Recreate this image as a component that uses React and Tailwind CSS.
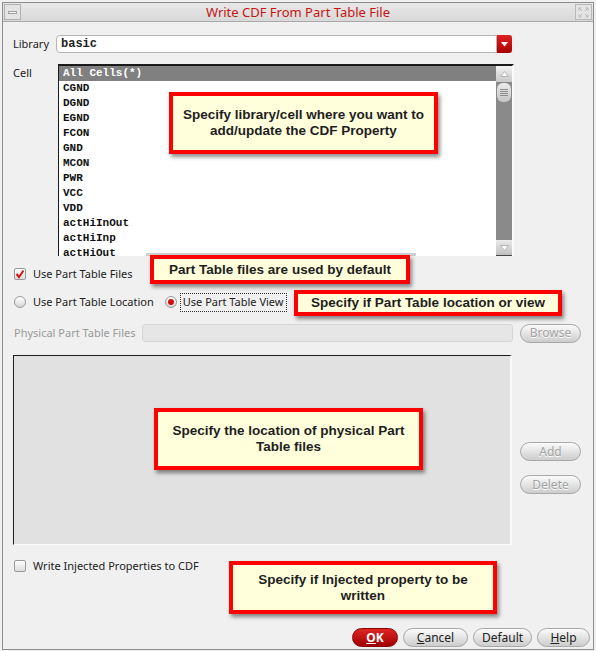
import React from 'react'

const ui = { fontFamily: '"Noto Sans", "DejaVu Sans", sans-serif' }
const mono = { fontFamily: '"Liberation Mono", "DejaVu Sans Mono", monospace' }
const note = { fontFamily: '"Liberation Sans", Arial, sans-serif' }

const cells = ['CGND', 'DGND', 'EGND', 'FCON', 'GND', 'MCON', 'PWR', 'VCC', 'VDD', 'actHiInOut', 'actHiInp', 'actHiOut']

function Btn({ children, className = '', disabled }) {
  return (
    <div
      className={`h-[19px] rounded-full border border-[#a8a8a8] bg-gradient-to-b from-[#fbfbfb] to-[#cdcdcd] flex items-center justify-center text-[12px] ${disabled ? 'text-[#a2a2a2] [text-shadow:0_1px_0_#fff]' : 'text-[#222]'} ${className}`}
    >
      {children}
    </div>
  )
}

function Callout({ className, children }) {
  return (
    <div
      style={note}
      className={`absolute border-[4px] border-[#ff0000] bg-[#ffffdc] shadow-[2px_3px_4px_rgba(0,0,0,0.45)] flex items-center justify-center text-center text-[13.5px] leading-[16px] font-bold text-[#1e1e1e] ${className}`}
    >
      {children}
    </div>
  )
}

function Check({ checked }) {
  return (
    <div className="w-[12px] h-[12px] rounded-[2px] border border-[#9a9a9a] bg-gradient-to-b from-[#ffffff] to-[#dcdcdc] flex items-center justify-center">
      {checked && (
        <svg width="10" height="10" viewBox="0 0 10 10">
          <path d="M1.5 5 L4 8 L8.5 1.5" fill="none" stroke="#d01818" strokeWidth="2" />
        </svg>
      )}
    </div>
  )
}

function Radio({ checked }) {
  return (
    <div className="w-[12px] h-[12px] rounded-full border border-[#9a9a9a] bg-gradient-to-b from-[#ffffff] to-[#d6d6d6] flex items-center justify-center">
      {checked && <div className="w-[6px] h-[6px] rounded-full bg-[#d01010]" />}
    </div>
  )
}

export default function App() {
  return (
    <div style={ui} className="relative w-[596px] h-[651px] bg-[#f0f0f0] overflow-hidden">
      <div className="absolute left-[2px] top-[2px] w-[592px] h-[648px] border border-[#8e8e8e] flex flex-col">
        {/* title bar */}
        <div className="h-[19px] flex items-center bg-gradient-to-b from-[#e8e8e8] to-[#d8d8d8] border-b border-[#a9a9a9] relative">
          <div className="ml-[1px] w-[17px] h-[16px] border border-[#b0b0b0] bg-[#e4e4e4] flex items-center justify-center">
            <div className="w-[9px] h-[3px] border border-[#a0a0a0] bg-[#f4f4f4]" />
          </div>
          <div className="flex-1 text-center text-[13px] text-[#c81414] leading-none pt-[1px]">Write CDF From Part Table File</div>
          <div className="mr-[1px] w-[17px] h-[16px] border border-[#b8b8b8] bg-[#e4e4e4] flex items-center justify-center">
            <svg width="11" height="11" viewBox="0 0 11 11" fill="none" stroke="#b8b8b8" strokeWidth="1">
              <path d="M1 1 L4 4 M1 3.5 V1 H3.5 M10 1 L7 4 M7.5 1 H10 V3.5 M1 10 L4 7 M1 7.5 V10 H3.5 M10 10 L7 7 M10 7.5 V10 H7.5" />
            </svg>
          </div>
        </div>

        <div className="pl-[10px] flex flex-col text-[11px] text-[#222]">
          {/* Library */}
          <div className="mt-[13px] h-[18px] flex items-center">
            <div className="w-[43px]">Library</div>
            <div className="w-[441px] h-[18px] bg-white border border-[#b4b4b4] rounded-l-[4px] flex items-center pl-[4px] text-[12px] font-bold" style={mono}>
              basic
            </div>
            <div className="w-[15px] h-[18px] rounded-r-[3px] bg-gradient-to-b from-[#e02020] to-[#a80000] flex items-center justify-center">
              <svg width="7" height="5" viewBox="0 0 7 5"><path d="M0 0 H7 L3.5 4.5 Z" fill="#fff" /></svg>
            </div>
          </div>

          {/* Cell */}
          <div className="mt-[11px] flex">
            <div className="w-[45px] pt-[1px]">Cell</div>
            <div className="relative w-[456px] h-[192px] bg-white border-t-2 border-l border-t-[#1a1a1a] border-l-[#1a1a1a] border-r-2 border-r-[#fafafa] flex overflow-hidden">
              <div className="flex-1 flex flex-col text-[11px] font-bold leading-[15px]" style={mono}>
                <div className="h-[15px] bg-[#808080] text-white pl-[4px]">All Cells(*)</div>
                {cells.map(c => (
                  <div key={c} className="h-[15px] pl-[4px] text-[#111]">{c}</div>
                ))}
              </div>
              <div className="absolute left-[87px] bottom-0 w-[270px] h-[3px] bg-[#cfcfcf]" />
              <div className="w-[16px] bg-[#8a8a8a] flex flex-col justify-between">
                <div>
                  <div className="h-[16px] bg-gradient-to-b from-[#f2f2f2] to-[#c8c8c8] flex items-center justify-center">
                    <svg width="9" height="6" viewBox="0 0 9 6"><path d="M0.5 5.5 H8.5 L4.5 0.5 Z" fill="#fff" stroke="#b5b5b5" /></svg>
                  </div>
                  <div className="mt-[1px] mx-[1px] h-[19px] rounded-[6px] bg-gradient-to-b from-[#ececec] to-[#c4c4c4] flex flex-col items-center justify-center gap-[1px]">
                    {[0, 1, 2, 3].map(i => <div key={i} className="w-[8px] h-px bg-[#8e8e8e]" />)}
                  </div>
                </div>
                <div className="h-[16px] bg-gradient-to-b from-[#ececec] to-[#c0c0c0] border-b border-[#444] flex items-center justify-center">
                  <svg width="9" height="6" viewBox="0 0 9 6"><path d="M0.5 0.5 H8.5 L4.5 5.5 Z" fill="#fff" stroke="#b5b5b5" /></svg>
                </div>
              </div>
            </div>
          </div>

          {/* Use Part Table Files */}
          <div className="mt-[11px] h-[14px] flex items-center pl-[1px] gap-[7px]">
            <Check checked />
            <span>Use Part Table Files</span>
          </div>

          {/* radios */}
          <div className="mt-[14px] h-[14px] flex items-center pl-[1px]">
            <Radio />
            <span className="ml-[7px]">Use Part Table Location</span>
            <div className="ml-[11px]"><Radio checked /></div>
            <span className="ml-[3px] px-[2px] h-[19px] flex items-center border border-dotted border-[#333]">Use Part Table View</span>
          </div>

          {/* Physical Part Table Files */}
          <div className="mt-[15px] h-[18px] flex items-center">
            <div className="w-[129px] pl-[1px] text-[#9a9a9a]">Physical Part Table Files</div>
            <div className="w-[371px] h-[18px] rounded-[3px] bg-[#e6e6e6] border border-[#d6d6d6]" />
            <Btn disabled className="ml-[7px] w-[61px]">Browse</Btn>
          </div>

          {/* big area */}
          <div className="mt-[13px] flex">
            <div className="w-[499px] h-[190px] bg-[#e1e1e1] border-t border-l border-[#1e1e1e] border-r-2 border-r-[#fafafa] border-b border-b-[#fafafa]" />
            <div className="ml-[8px] pt-[87px] flex flex-col gap-[14px]">
              <Btn disabled className="w-[61px]">Add</Btn>
              <Btn disabled className="w-[61px]">Delete</Btn>
            </div>
          </div>

          {/* write injected */}
          <div className="mt-[14px] h-[14px] flex items-center pl-[1px] gap-[7px]">
            <Check />
            <span>Write Injected Properties to CDF</span>
          </div>
        </div>

        {/* bottom buttons */}
        <div className="mt-auto mb-[2px] h-[19px] flex justify-end pr-[3px] gap-[5px]">
          <div className="w-[46px] h-[19px] rounded-full border border-[#8a0000] bg-gradient-to-b from-[#e02424] to-[#a00000] flex items-center justify-center text-white text-[12px] font-bold">
            <span className="underline">O</span>K
          </div>
          <Btn className="w-[65px]"><span className="underline">C</span>ancel</Btn>
          <Btn className="w-[59px]">Default</Btn>
          <Btn className="w-[53px]"><span className="underline">H</span>elp</Btn>
        </div>
      </div>

      <Callout className="left-[169px] top-[92px] w-[269px] h-[62px]">
        Specify library/cell where you want to<br />add/update the CDF Property
      </Callout>
      <Callout className="left-[150px] top-[255px] w-[260px] h-[29px]">
        Part Table files are used by default
      </Callout>
      <Callout className="left-[294px] top-[290px] w-[268px] h-[26px]">
        Specify if Part Table location or view
      </Callout>
      <Callout className="left-[154px] top-[408px] w-[269px] h-[62px]">
        Specify the location of physical Part<br />Table files
      </Callout>
      <Callout className="left-[229px] top-[561px] w-[268px] h-[53px]">
        Specify if Injected property to be<br />written
      </Callout>
    </div>
  )
}
